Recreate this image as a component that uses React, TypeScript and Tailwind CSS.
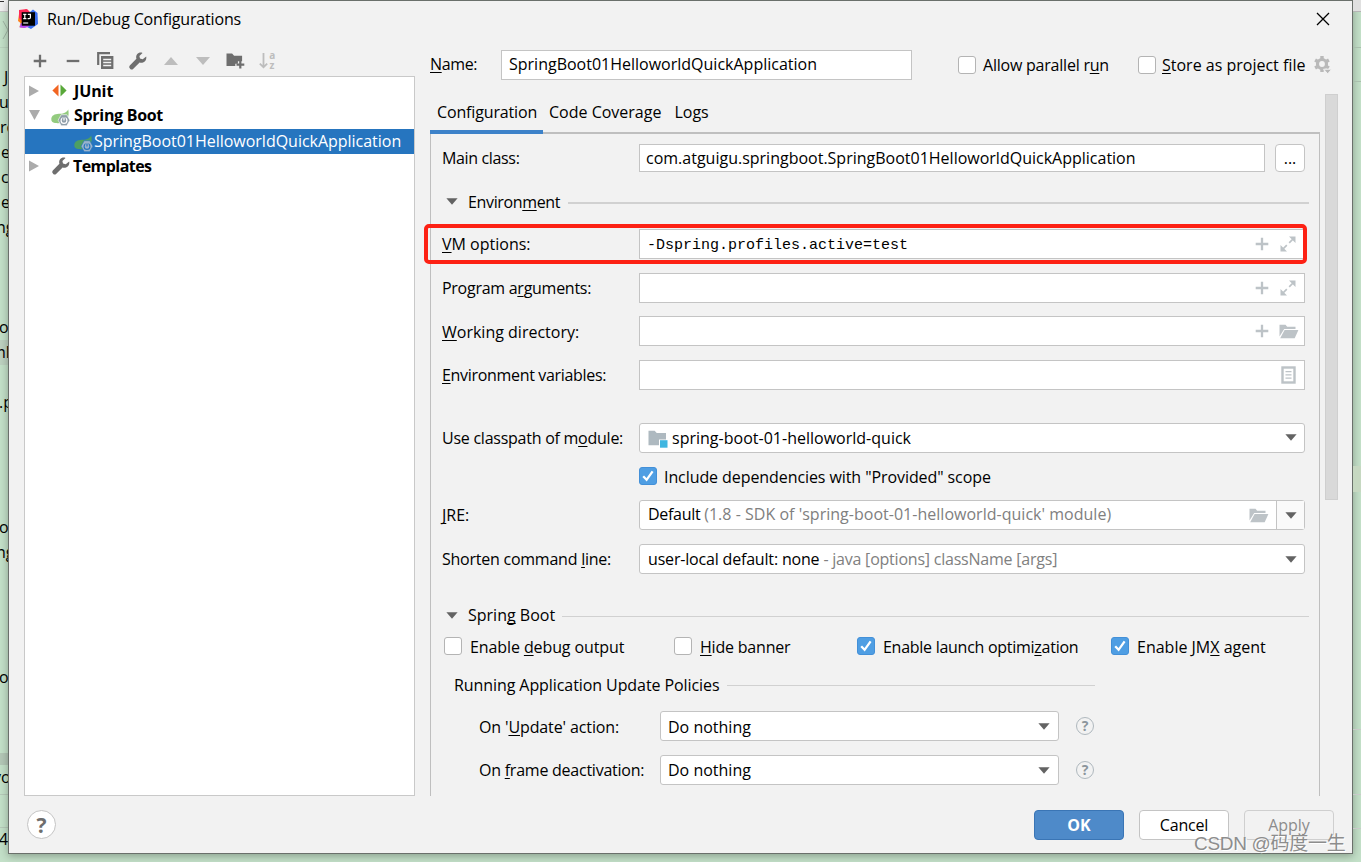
import React from "react";

type IconProps = { className?: string };

/* ---------- icons ---------- */

const IdeaLogo = () => (
  <svg width="20" height="20" viewBox="0 0 20 20">
    <path d="M1 5 L8 0 L11 7 L6 19 L1.500 18 L2.500 14 L0 12 Z" fill="#fc801d" />
    <path d="M1 1 L9 0 L14 5 L7 15 L1 9 Z" fill="#fe2857" />
    <path d="M12 3 L15 .5 L19.500 4 L20 15 L13 20 L7 17 Z" fill="#3b6ff0" />
    <path d="M1.500 18.500 L3 14 L12 15 L11 17.500 L7 19 Z" fill="#b74af7" />
    <rect x="3.700" y="3.200" width="13.300" height="13.500" fill="#000" />
    <path d="M5.200 5.300h3.200M6.800 5.300v4.400M5.200 9.700h3.200M9.800 5.300h2.600v3.200q0 1.200-1.200 1.200H9.600" stroke="#fff" strokeWidth="1.200" fill="none" />
    <path d="M5.200 14h5" stroke="#fff" strokeWidth="1.100" />
  </svg>
);

const PlusIcon = ({ className = "" }: IconProps) => (
  <svg width="14" height="14" viewBox="0 0 14 14" className={className}>
    <path d="M7 .7v12.600M.7 7h12.600" stroke="currentColor" strokeWidth="2.300" />
  </svg>
);

const MinusIcon = () => (
  <svg width="14" height="14" viewBox="0 0 14 14">
    <path d="M.7 7h12.600" stroke="currentColor" strokeWidth="2.300" />
  </svg>
);

const CopyIcon = () => (
  <svg width="17" height="18" viewBox="0 0 17 18">
    <path d="M1.200 13V1.200H13" stroke="currentColor" strokeWidth="2.200" fill="none" />
    <path fillRule="evenodd" d="M4 4h12.400v13H4zM6.200 6.800v1.500h8V6.800zM6.200 9.800v1.500h8V9.800zM6.200 12.800v1.500h8v-1.500z" fill="currentColor" />
  </svg>
);

const WrenchIcon = () => (
  <svg width="18" height="18" viewBox="0 0 18 18">
    <path
      d="M17.200 4.400 13.700 7.300 11 6.600 10.400 4.100 13.500.9C11.600.2 9.300.7 8.100 2.300 7.100 3.600 6.900 5.300 7.400 6.800L.8 13.500c-.7.8-.7 2 0 2.800l.5.6c.8.8 2 .8 2.800 0l6.500-6.400c1.700.6 3.700.2 5.100-1.100 1.400-1.300 1.900-3.300 1.500-5z"
      fill="currentColor"
    />
  </svg>
);

const FolderPlusIcon = () => (
  <svg width="19" height="17" viewBox="0 0 19 17">
    <path d="M.5 1.500h5.600l2 2.300h8v5.400h-4.200v2.600H9.300V14H.5z" fill="currentColor" />
    <path d="M14.300 8.800v7.600M10.500 12.600h7.800" stroke="currentColor" strokeWidth="2.200" />
  </svg>
);

const SortIcon = () => (
  <svg width="18" height="18" viewBox="0 0 18 18">
    <path d="M4.500 1v14M.8 11.600l3.700 3.600 3.700-3.600" stroke="currentColor" strokeWidth="1.800" fill="none" />
    <text x="10.200" y="7" fontSize="10" fontWeight="700" fontFamily="Open Sans" fill="currentColor">a</text>
    <text x="10.400" y="17" fontSize="10" fontWeight="700" fontFamily="Open Sans" fill="currentColor">z</text>
  </svg>
);

const ArrowUp = () => (
  <svg width="14" height="8" viewBox="0 0 14 8"><path d="M0 8 7 0l7 8z" fill="currentColor" /></svg>
);

const ArrowDown = ({ className = "" }: IconProps) => (
  <svg width="14" height="8" viewBox="0 0 14 8" className={className}><path d="M0 0h14L7 8z" fill="currentColor" /></svg>
);

const Chevron = ({ className = "" }: IconProps) => (
  <svg width="12" height="7" viewBox="0 0 12 7" className={className}><path d="M.4.3h11.200L6 6.800z" fill="#636363" /></svg>
);

const JUnitIcon = () => (
  <svg width="15" height="13" viewBox="0 0 15 13">
    <path d="M6.500.5v12L.4 6.500z" fill="#f26522" />
    <path d="M8.500.5v12l6.100-6z" fill="#59a839" />
  </svg>
);

const SpringIcon = ({ leaf, gear, hole }: { leaf: string; gear: string; hole: string }) => (
  <svg width="19" height="17" viewBox="0 0 19 17">
    <path d="M17.300.4c.6 3.700.5 7-1 9.600-2 3.600-7 4.600-12.400 4C1.600 13.700 0 12.200.3 9.800.6 6.700 3.500 5 7.800 4.800 11.500 4.600 15 4.200 17.300.4z" fill={leaf} />
    <path d="M10.200 5.700h5.600l3.100 5.500-3.100 5.500h-5.600l-3.100-5.500z" fill={gear} stroke={hole} strokeWidth=".6" />
    <circle cx="13" cy="11.400" r="2.900" fill="none" stroke={hole} strokeWidth="1.200" />
    <path d="M13 7.800v3.200" stroke={gear} strokeWidth="2.800" />
    <path d="M13 8.400v3" stroke={hole} strokeWidth="1.200" />
  </svg>
);

const GearIcon = () => (
  <svg width="18" height="18" viewBox="0 0 18 18">
    <circle cx="8" cy="8" r="4.500" fill="none" stroke="#b9b9b9" strokeWidth="3.200" />
    <path d="M8 0v3M8 13v3M1.100 4l2.600 1.500M12.300 10.500l2.600 1.500M1.100 12l2.600-1.500M12.300 5.500 14.900 4" stroke="#b9b9b9" strokeWidth="3.400" />
    <path d="M9.600 13.200h8.200L13.700 17.800z" fill="#b9b9b9" stroke="#f2f2f2" strokeWidth="1" />
  </svg>
);

const ExpandIcon = () => (
  <svg width="16" height="16" viewBox="0 0 16 16">
    <path d="M9 .5h6.500V7z M.5 9v6.500H7z" fill="#bdc3c7" />
    <path d="M13.500 2.500 9.200 6.800M2.500 13.500l4.300-4.300" stroke="#bdc3c7" strokeWidth="1.700" />
  </svg>
);

const FolderOpenIcon = () => (
  <svg width="20" height="15" viewBox="0 0 20 15">
    <path d="M.5 12.500V.7h6l1.700 2h8.300v2.200H5.200z" fill="#bdc3c7" />
    <path d="M5.600 6h13.800l-3.700 8.300H1.200z" fill="#bdc3c7" />
  </svg>
);

const ListIcon = () => (
  <svg width="15" height="18" viewBox="0 0 15 18">
    <rect x="1.500" y="1.500" width="12" height="15" fill="#fff" stroke="#bdc3c7" strokeWidth="2.400" />
    <path d="M4.500 5.700h6M4.500 8.900h6M4.500 12.100h6" stroke="#bdc3c7" strokeWidth="1.200" />
  </svg>
);

const ModuleIcon = () => (
  <svg width="20" height="18" viewBox="0 0 20 18">
    <path d="M.5.8h6.200l2 2.200h9.300v6.500h-7v5.700H.5z" fill="#aeb9c0" />
    <rect x="12" y="10.200" width="7.500" height="7.500" fill="#40b6e0" />
  </svg>
);

/* ---------- small parts ---------- */

// "&" marks the mnemonic letter, like in the swing resource bundles
const Label = ({ text, className = "" }: { text: string; className?: string }) => {
  const i = text.indexOf("&");
  if (i < 0) return <span className={`whitespace-pre ${className}`}>{text}</span>;
  return (
    <span className={`whitespace-pre ${className}`}>
      {text.slice(0, i)}
      <span className="underline decoration-1 underline-offset-2 [text-decoration-skip-ink:none]">{text[i + 1]}</span>
      {text.slice(i + 2)}
    </span>
  );
};

const Checkbox = ({ checked = false }: { checked?: boolean }) =>
  checked ? (
    <span className="flex size-[18px] shrink-0 items-center justify-center rounded-[3px] border border-[#4390d8] bg-[#4f9ee3]">
      <svg width="14" height="14" viewBox="0 0 14 14"><path d="M2.200 7.300 5.600 10.800 11.600 2.400" stroke="#fff" strokeWidth="2.300" fill="none" /></svg>
    </span>
  ) : (
    <span className="size-[18px] shrink-0 rounded-[3px] border border-[#b4b4b4] bg-white" />
  );

const Field = ({ className = "", children }: { className?: string; children?: React.ReactNode }) => (
  <div className={`flex shrink-0 items-center border border-[#c4c4c4] bg-white ${className}`}>{children}</div>
);

const Row = ({ label, tracking = "", className = "", children }: { label: string; tracking?: string; className?: string; children: React.ReactNode }) => (
  <div className={`flex items-center ${className}`}>
    <div className="w-[197px] shrink-0"><Label text={label} className={tracking} /></div>
    {children}
  </div>
);

const Help = () => (
  <span className="ml-[17px] flex size-[18px] items-center justify-center rounded-full border-[1.500px] border-[#afb8be] text-[14px] font-bold leading-none text-[#8c969c]">?</span>
);

const toolbar = [
  { icon: <PlusIcon />, color: "text-[#6e6e6e]" },
  { icon: <MinusIcon />, color: "text-[#6e6e6e]" },
  { icon: <CopyIcon />, color: "text-[#6e6e6e]" },
  { icon: <WrenchIcon />, color: "text-[#6e6e6e]" },
  { icon: <ArrowUp />, color: "text-[#bdbdbd]" },
  { icon: <ArrowDown />, color: "text-[#bdbdbd]" },
  { icon: <FolderPlusIcon />, color: "text-[#6e6e6e]" },
  { icon: <SortIcon />, color: "text-[#bdbdbd]" },
];

// what is left of the editor behind the dialog, 25px per line
const behind = ["J", "u", "ro", "e", "c", "e", "ng", "", "", "", "o", "ml", "", ".p", "", "", "", "", "o", "ng", "", "", "", "", "o", "", "", "", "vo"];

const offsets: Record<string, string> = {
  J: "ml-1",
  u: "-ml-px",
  e: "ml-px",
  c: "ml-px",
  ng: "-ml-1",
  o: "-ml-px",
  ml: "-ml-[9px]",
  ".p": "-ml-px",
  vo: "-ml-[7px]",
};

const Behind = () => (
  <div className="flex w-2 shrink-0 flex-col overflow-hidden text-[16px] leading-[25px]">
    <div className="h-3 shrink-0 border-b border-[#c8c8c8] bg-[#f0f0f0]">
      <div className="mt-px h-px w-1 bg-[#333333]" />
    </div>
    <div className="flex h-[36px] shrink-0 items-center border-b border-[#b9d2bd]">
      <svg width="8" height="20" viewBox="0 0 8 20"><path d="M3 1l5 9-5 9" stroke="#a0b5a4" fill="none" /></svg>
    </div>
    <div className="h-[17px] shrink-0" />
    {behind.map((t, i) => (
      <div key={i} className={`flex h-[25px] shrink-0 ${t === "ml" ? "bg-[#bdd1c0]" : ""} ${i === 27 ? "border-b-[12px] border-[#b3c7b6]" : ""}`}>
        <span className={offsets[t]}>{t}</span>
      </div>
    ))}
    <div className="mt-1 h-[34px] shrink-0 border-y border-[#b5c9b8]" />
    <div className="-mt-px flex shrink-0"><span className="-ml-px">4</span></div>
  </div>
);

/* ---------- left side ---------- */

const Sidebar = () => (
  <aside className="flex w-[391px] shrink-0 flex-col">
    <div className="flex h-[38px] shrink-0 items-center pt-[7px]">
      {toolbar.map((t, i) => (
        <span key={i} className={`flex w-[32.600px] justify-center ${t.color}`}>{t.icon}</span>
      ))}
    </div>
    <div className="flex-1 border border-[#c9c9c9] bg-white font-bold">
      <div className="flex h-[27px] items-center">
        <svg width="10" height="12" viewBox="0 0 10 12" className="ml-1 text-[#ababab]"><path d="M0 .5v11L10 6z" fill="currentColor" /></svg>
        <span className="ml-[13px] mr-[7px] flex"><JUnitIcon /></span>
        <span className="tracking-[-0.100px]">JUnit</span>
      </div>
      <div className="flex h-[25px] items-center pb-[3px]">
        <svg width="11" height="10" viewBox="0 0 11 10" className="ml-1 text-[#ababab]"><path d="M0 0h11L5.500 10z" fill="currentColor" /></svg>
        <span className="ml-[11px] mr-1 flex pt-[5px]"><SpringIcon leaf="#93cb7f" gear="#8f9ea9" hole="#ffffff" /></span>
        <span className="tracking-[-0.300px]">Spring Boot</span>
      </div>
      <div className="flex h-[25px] items-center bg-[#2675bf] pb-[2px] font-normal text-white">
        <span className="ml-[49px] mr-px flex pt-[5px]"><SpringIcon leaf="#4d9f62" gear="#9bb4cd" hole="#2675bf" /></span>
        <span className="tracking-[-0.020px]">SpringBoot01HelloworldQuickApplication</span>
      </div>
      <div className="flex h-[25px] items-center pb-[2px]">
        <svg width="10" height="12" viewBox="0 0 10 12" className="ml-1 text-[#ababab]"><path d="M0 .5v11L10 6z" fill="currentColor" /></svg>
        <span className="ml-[13px] mr-[3px] flex text-[#6e6e6e]"><WrenchIcon /></span>
        <span className="tracking-[-0.550px]">Templates</span>
      </div>
    </div>
  </aside>
);

/* ---------- configuration tab ---------- */

const Configuration = () => (
  <div className="flex h-[662px] flex-col border-x border-[#bfbfbf] pl-[11px]">
    <Row label="Main class:" tracking="tracking-[-0.350px]" className="mt-[10px] h-7">
      <Field className="h-7 w-[626px] pl-[6px]">com.atguigu.springboot.SpringBoot01HelloworldQuickApplication</Field>
      <button className="ml-[10px] h-7 w-[30px] rounded-[4px] border border-[#c4c4c4] bg-white leading-none">...</button>
    </Row>

    <div className="mt-[19px] flex h-6 items-center pr-[10px]">
      <Chevron className="mb-[3px] ml-1" />
      <Label text="Environ&ment" className="ml-[10px] pb-[2px] tracking-[-0.350px]" />
      <span className="ml-2 h-[2px] flex-1 bg-[#d1d1d1]" />
    </div>

    <div className="relative mt-[14px]">
      <Row label="&VM options:" className="h-[29px]">
        <Field className="h-[30px] w-[666px] pl-[7px] pr-2">
          <span className="flex-1 pt-[5px] font-['Liberation_Mono',monospace] text-[15px]">-Dspring.profiles.active=test</span>
          <PlusIcon className="mr-[11px] text-[#bdc3c7]" />
          <ExpandIcon />
        </Field>
      </Row>
      {/* highlight frame */}
      <span className="absolute -left-[18px] -top-[5px] h-10 w-[883px] rounded-[5px] border-4 border-[#fd2114]" />
    </div>
    <Row label="Program a&rguments:" tracking="tracking-[-0.270px]" className="mt-[15px] h-[29px]">
      <Field className="h-[30px] w-[666px] justify-end pr-2">
        <PlusIcon className="mr-[11px] text-[#bdc3c7]" />
        <ExpandIcon />
      </Field>
    </Row>
    <Row label="&Working directory:" tracking="inline-block pt-[2px]" className="mt-[14px] h-[30px]">
      <Field className="h-[30px] w-[666px] justify-end pr-[5px]">
        <PlusIcon className="mr-[10px] text-[#bdc3c7]" />
        <FolderOpenIcon />
      </Field>
    </Row>
    <Row label="&Environment variables:" tracking="tracking-[-0.320px]" className="mt-[14px] h-[30px]">
      <Field className="h-[30px] w-[666px] justify-end pr-2"><ListIcon /></Field>
    </Row>

    <Row label="Use classpath of m&odule:" tracking="tracking-[-0.250px]" className="mt-[33px] h-[29px]">
      <Field className="h-[30px] w-[666px] rounded-[3px] pl-2 pr-[7px]">
        <span className="mr-1 pt-[2px]"><ModuleIcon /></span>
        <span className="flex-1 tracking-[0.010px]">spring-boot-01-helloworld-quick</span>
        <Chevron />
      </Field>
    </Row>
    <div className="ml-[197px] mt-[15px] flex h-[18px] items-center">
      <Checkbox checked />
      <Label text={'Include dependencies with "Provided" scope'} className="ml-[7px] pt-px tracking-[-0.080px]" />
    </div>
    <Row label="&JRE:" className="mt-[15px] h-[30px]">
      <Field className="h-[30px] w-[666px] rounded-[3px] pl-2">
        <span className="flex-1 whitespace-pre pb-[2px]">
          <span className="tracking-[-0.300px]">Default </span>
          <span className="tracking-[0.020px] text-[#808080]">(1.8 - SDK of 'spring-boot-01-helloworld-quick' module)</span>
        </span>
        <FolderOpenIcon />
        <span className="ml-[7px] flex h-full w-[28px] items-center justify-center border-l border-[#c4c4c4] bg-[#fafafa]"><Chevron /></span>
      </Field>
    </Row>
    <Row label="Shorten command &line:" tracking="tracking-[-0.240px]" className="mt-[14px] h-[30px]">
      <Field className="h-[30px] w-[666px] rounded-[3px] pl-2 pr-[7px]">
        <span className="flex-1 whitespace-pre pb-px">
          <span className="tracking-[-0.180px]">user-local default: none </span>
          <span className="tracking-[-0.220px] text-[#808080]">- java [options] className [args]</span>
        </span>
        <Chevron />
      </Field>
    </Row>

    <div className="mt-[30px] flex h-6 items-center pr-[10px]">
      <Chevron className="mb-px ml-1" />
      <Label text="Sprin&g Boot" className="ml-[10px] pb-[2px]" />
      <span className="ml-[7px] h-px flex-1 bg-[#d1d1d1]" />
    </div>
    <div className="ml-[2px] mt-[9px] flex h-[18px] items-center">
      <div className="flex w-[230px] items-center"><Checkbox /><Label text="Enable &debug output" className="ml-2 pt-[2px] tracking-[-0.100px]" /></div>
      <div className="flex w-[183px] items-center"><Checkbox /><Label text="&Hide banner" className="ml-2 pt-[2px] tracking-[-0.200px]" /></div>
      <div className="flex w-[254px] items-center"><Checkbox checked /><Label text="Enable launch optimi&zation" className="ml-2 pt-[2px] tracking-[-0.270px]" /></div>
      <div className="flex items-center"><Checkbox checked /><Label text="Enable JM&X agent" className="ml-2 pt-[2px]" /></div>
    </div>

    <div className="ml-3 mt-[18px] flex h-6 w-[641px] items-center">
      <Label text="Running Application Update Policies" className="tracking-[-0.080px]" />
      <span className="ml-[7px] h-px flex-1 bg-[#d1d1d1]" />
    </div>
    <div className="ml-[37px] mt-[14px] flex h-[30px] items-center">
      <Label text="On '&Update' action:" className="w-[181px] pt-[2px] tracking-[-0.120px]" />
      <Field className="h-[30px] w-[399px] rounded-[3px] pl-[7px] pr-2"><span className="flex-1 pt-[2px]">Do nothing</span><Chevron /></Field>
      <Help />
    </div>
    <div className="ml-[37px] mt-[14px] flex h-[30px] items-center">
      <Label text="On &frame deactivation:" className="w-[181px] tracking-[-0.240px]" />
      <Field className="h-[30px] w-[399px] rounded-[3px] pl-[7px] pr-2"><span className="flex-1">Do nothing</span><Chevron /></Field>
      <Help />
    </div>
  </div>
);

const App = () => {
  return (
    <main className="relative flex h-[862px] w-[1361px] overflow-hidden bg-[#c3e0c8] font-['Open_Sans','Noto_Sans_CJK_SC',sans-serif] text-[16px] leading-[22px] text-black">
      <Behind />

      {/* dialog */}
      <div className="flex h-[854px] w-[1345px] shrink-0 flex-col border border-[#6a706b] bg-[#f2f2f2] shadow-[0_2px_8px_rgba(0,0,0,0.300)]">
        <header className="flex h-[37px] shrink-0 items-center pb-[2px] pl-[9px]">
          <IdeaLogo />
          <h1 className="ml-[9px] flex-1 tracking-[-0.170px]">Run/Debug Configurations</h1>
          <svg width="14" height="14" viewBox="0 0 14 14" className="mr-[22px]"><path d="M1 1l12 12M13 1 1 13" stroke="#000" strokeWidth="1.300" /></svg>
        </header>

        <div className="flex h-[758px] shrink-0 pl-[15px]">
          <Sidebar />
          <section className="ml-[15px] w-[908px]">
            <div className="mt-3 flex h-[30px] items-center">
              <Label text="&Name:" className="w-[71px] pb-[2px] tracking-[-0.350px]" />
              <Field className="h-[30px] w-[411px] pb-[2px] pl-[7px]">SpringBoot01HelloworldQuickApplication</Field>
              <span className="ml-[46px] flex"><Checkbox /></span>
              <Label text="Allow parallel r&un" className="ml-[7px] w-[155px] tracking-[-0.220px]" />
              <Checkbox />
              <Label text="&Store as project file" className="ml-[6px] mr-[9px]" />
              <GearIcon />
            </div>

            <div className="mt-[14px] flex">
              <div className="w-[890px]">
                <nav className="flex h-10 border-b-2 border-[#bfbfbf]">
                  <span className="-mb-[2px] flex w-[113px] items-center border-b-4 border-[#3d82c9] pl-[7px] tracking-[-0.150px]">Configuration</span>
                  <span className="ml-[6px] flex h-9 items-center">Code Coverage</span>
                  <span className="ml-[13px] flex h-9 items-center">Logs</span>
                </nav>
                <Configuration />
              </div>
              {/* scrollbar thumb */}
              <div className="ml-[5px] h-[406px] w-[13px] border border-[#cfcfcf] bg-[#d9d9d9]" />
            </div>
          </section>
        </div>

        <footer className="flex pl-[18px] pt-[14px]">
          <span className="flex size-[29px] items-center justify-center rounded-full border border-[#c4c4c4] bg-white text-[21px] font-bold text-[#6e6e6e]">?</span>
          <button className="ml-[978px] h-[30px] w-[90px] rounded-[4px] border border-[#3a75b5] bg-[#4e8ac9] font-bold text-white">OK</button>
          <button className="ml-[15px] h-[30px] w-[90px] rounded-[4px] border border-[#c4c4c4] bg-white tracking-[-0.200px]">Cancel</button>
          <button className="ml-[15px] h-[30px] w-[90px] rounded-[4px] border border-[#cfcfcf] text-[#8c8c8c]">Apply</button>
        </footer>
      </div>

      {/* editor edge on the right */}
      <div className="flex w-2 flex-col">
        <div className="h-3 border-b border-[#b5b5b5] bg-[#e0e0e0]" />
        <div className="h-9 border-b border-[#a9bfad]" />
        <div className="h-[34px] border-b border-[#a9bfad]" />
        <div className="mt-[384px] h-[26px] bg-[#c6d8c1]" />
        <div className="mt-[237px] h-[66px] border-y border-[#c9c9c9]" />
        <div className="h-[34px] border-b border-[#c9c9c9]" />
      </div>

      <span className="absolute left-[1194px] top-[832px] whitespace-nowrap text-[19px] leading-[24px] tracking-[-0.300px] text-[#8d8d8d] [text-shadow:1px_1px_0_#fff] font-['Liberation_Sans','Noto_Sans_CJK_SC',sans-serif]">CSDN @码度一生</span>
    </main>
  );
};

export default App;
